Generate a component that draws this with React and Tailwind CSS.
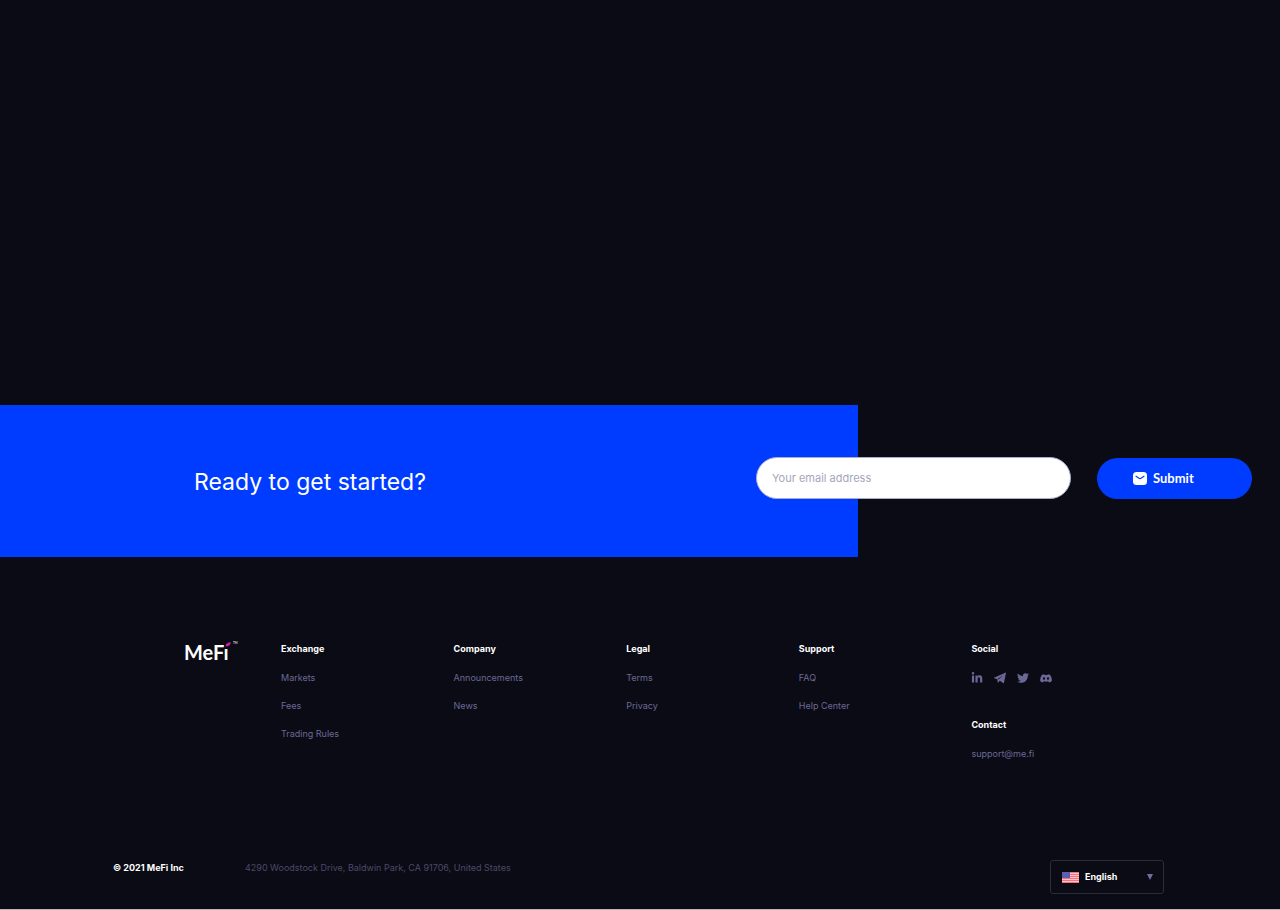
import React from "react";
import { FaLinkedinIn, FaTwitter } from "react-icons/fa";

const columns = [
  { title: "Exchange", links: ["Markets", "Fees", "Trading Rules"] },
  { title: "Company", links: ["Announcements", "News"] },
  { title: "Legal", links: ["Terms", "Privacy"] },
  { title: "Support", links: ["FAQ", "Help Center"] },
];

function TelegramPlane({ className }) {
  return (
    <svg viewBox="0 0 24 24" className={className} aria-hidden="true">
      <path
        d="M23.900 2.200L20 21.300C19.800 22.400 19 22.700 18 22.100L11.700 17.500L8.600 20.900C8.100 21.500 7.300 21.200 7.200 20.400L6.800 14.400L0.700 12.500C-0.300 12.100 -0.200 11.400 0.800 11L22.600 1.300C23.500 1 24.100 1.400 23.900 2.200ZM8.600 15L19.300 5.800L7.900 13.700Z"
        fill="currentColor"
      />
    </svg>
  );
}

function DiscordFace({ className }) {
  return (
    <svg viewBox="0 0 24 24" className={className} aria-hidden="true">
      <path
        fillRule="evenodd"
        d="M8.500 4.500L9.200 6Q12 5.600 14.800 6L15.500 4.500Q18 4.800 20.500 6.200Q24 11.500 23.800 18Q21.500 20.200 18 20.800L16.500 18.600Q12 20 7.500 18.600L6 20.800Q2.500 20.200 0.200 18Q0 11.500 3.500 6.200Q6 4.800 8.500 4.500ZM8 10.500A2.200 2.400 0 1 0 8 15.300A2.200 2.400 0 1 0 8 10.500ZM16 10.500A2.200 2.400 0 1 0 16 15.300A2.200 2.400 0 1 0 16 10.500Z"
        fill="currentColor"
      />
    </svg>
  );
}

const socials = [
  { name: "LinkedIn", Icon: FaLinkedinIn },
  { name: "Telegram", Icon: TelegramPlane },
  { name: "Twitter", Icon: FaTwitter },
  { name: "Discord", Icon: DiscordFace },
];

function Logo() {
  return (
    <a href="#" aria-label="MeFi" className="block text-white">
      <svg viewBox="0 0 56 26" className="block h-[26px] w-14 overflow-visible">
        <text x="0" y="19" fontSize="20" fontWeight="700" fill="currentColor" fontFamily="Lato, sans-serif">
          MeFı
        </text>
        <path d="M41.500 5.600C41.800 2.600 43.600 1.300 46.800 1.300C46.500 4.300 44.600 5.600 41.500 5.600Z" fill="#c81fa6" />
        <text x="49" y="3" fontSize="3" fontWeight="700" fill="#d5d6de" fontFamily="Lato, sans-serif">
          TM
        </text>
      </svg>
    </a>
  );
}

function MailIcon() {
  return (
    <svg viewBox="0 0 14 13" className="h-[13px] w-[14px]" aria-hidden="true">
      <rect width="14" height="13" rx="3.500" fill="#fff" />
      <path d="M3 4.200L6 6.300Q7 7 8 6.300L11 4.200" fill="none" stroke="#003cff" strokeWidth="1.100" strokeLinecap="round" />
    </svg>
  );
}

function Flag() {
  return (
    <svg viewBox="0 0 17 11" className="h-[11px] w-[17px]" aria-hidden="true">
      <rect width="17" height="11" fill="#fbc3ca" />
      {[0, 2, 4, 6, 8, 10].map((y) => (
        <rect key={y} y={y} width="17" height="1" fill="#f4707e" />
      ))}
      <rect width="8" height="6" fill="#5a5fae" />
    </svg>
  );
}

export default function App() {
  return (
    <div className="flex min-h-screen flex-col justify-end border-b border-[#b5b5ba] bg-[#0a0b14] font-[Inter,'Liberation_Sans',sans-serif] text-[9px] leading-4 text-[#6a6996]">
      <section className="flex h-[152px] items-center justify-between bg-[linear-gradient(90deg,#003cff_67%,transparent_67%)] pr-7 pl-[194px]">
        <h2 className="pt-[2px] text-[23px] leading-8 font-normal text-white">Ready to get started?</h2>
        <form className="mb-[6px] flex items-center gap-[26px]" onSubmit={(e) => e.preventDefault()}>
          <input
            type="email"
            aria-label="Your email address"
            placeholder="Your email address"
            className="h-[42px] w-[315px] rounded-full border border-[#a9acd0] bg-white px-[15px] text-[11px] text-[#0a0b14] outline-none placeholder:text-[#a5a5bb]"
          />
          <button
            type="submit"
            className="flex h-[41px] w-[155px] items-center gap-[6px] rounded-full bg-[#003cff] pl-9 font-[Lato,sans-serif] text-[13px] font-bold text-white"
          >
            <MailIcon />
            Submit
          </button>
        </form>
      </section>

      <footer>
        <div className="flex pt-[84px] pr-[136px] pl-[184px]">
          <div className="w-[97px] shrink-0">
            <Logo />
          </div>
          <div className="grid flex-1 grid-cols-5">
            {columns.map((column) => (
              <nav key={column.title} aria-label={column.title}>
                <h3 className="font-bold text-white">{column.title}</h3>
                <ul className="mt-[13px] flex flex-col gap-3">
                  {column.links.map((link) => (
                    <li key={link}>
                      <a href="#">{link}</a>
                    </li>
                  ))}
                </ul>
              </nav>
            ))}
            <div>
              <h3 className="font-bold text-white">Social</h3>
              <div className="mt-[13px] flex h-4 items-center gap-[11px]">
                {socials.map(({ name, Icon }) => (
                  <a key={name} href="#" aria-label={name}>
                    <Icon className="size-3" />
                  </a>
                ))}
              </div>
              <h3 className="mt-[31px] font-bold text-white">Contact</h3>
              <a href="mailto:support@me.fi" className="mt-[13px] block">
                support@me.fi
              </a>
            </div>
          </div>
        </div>

        <div className="flex items-start pt-[98px] pr-[116px] pb-[15px] pl-[113px]">
          <p className="w-[132px] font-bold text-white">© 2021 MeFi Inc</p>
          <p className="text-[#4a4969]">4290 Woodstock Drive, Baldwin Park, CA 91706, United States</p>
          <div className="ml-auto grid h-[34px] w-[114px] items-center rounded-[3px] border border-[#2b2c3a]">
            <select
              aria-label="Language"
              className="col-start-1 row-start-1 h-full w-full appearance-none bg-transparent pl-[34px] font-bold text-white outline-none"
            >
              <option>English</option>
            </select>
            <div className="pointer-events-none col-start-1 row-start-1 flex items-center justify-between pr-[10px] pl-[11px]">
              <Flag />
              <svg viewBox="0 0 6 6" className="size-[6px]" aria-hidden="true">
                <path d="M0 0H6L3 6Z" fill="#6f6e9c" />
              </svg>
            </div>
          </div>
        </div>
      </footer>
    </div>
  );
}
